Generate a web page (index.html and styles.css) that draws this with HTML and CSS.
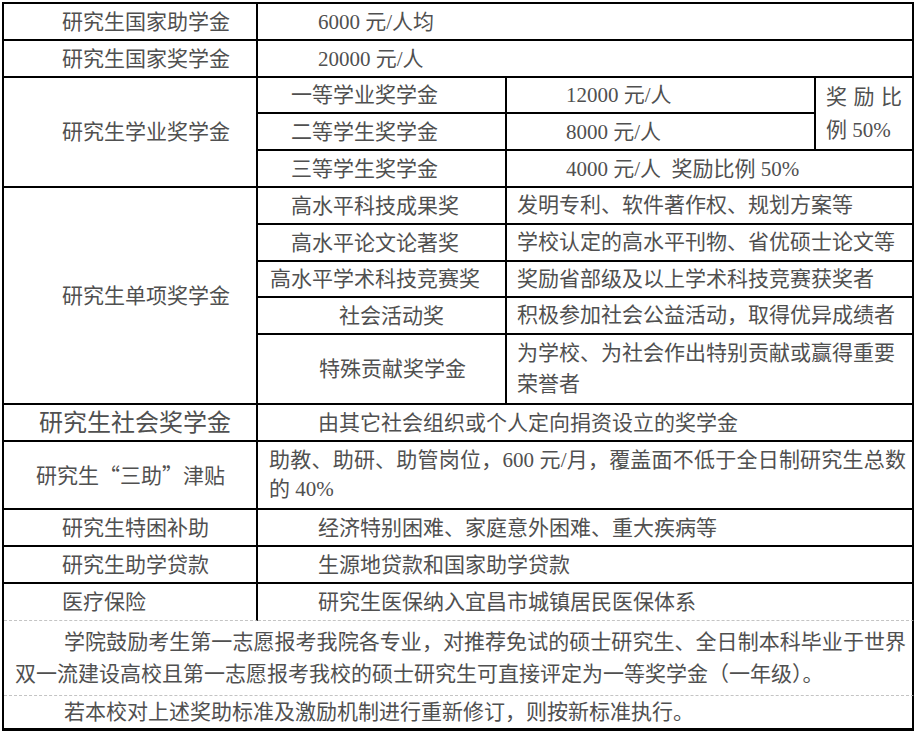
FILE: index.html
```html
<!DOCTYPE html>
<html lang="zh-CN">
<head>
<meta charset="utf-8">
<title>研究生奖助体系</title>
<link rel="stylesheet" href="styles.css">
</head>
<body>
<table class="aid">
  <colgroup>
    <col class="c1"><col class="c2"><col class="c3"><col class="c4">
  </colgroup>
  <tbody>
    <tr class="h37">
      <td class="lbl">研究生国家助学金</td>
      <td class="val" colspan="3">6000 元/人均</td>
    </tr>
    <tr class="h37">
      <td class="lbl">研究生国家奖学金</td>
      <td class="val" colspan="3">20000 元/人</td>
    </tr>
    <tr class="h36">
      <td class="lbl" rowspan="3">研究生学业奖学金</td>
      <td class="sub">一等学业奖学金</td>
      <td class="amt">12000 元/人</td>
      <td class="ratio" rowspan="2">奖 励 比 例 50%</td>
    </tr>
    <tr class="h37">
      <td class="sub">二等学生奖学金</td>
      <td class="amt">8000 元/人</td>
    </tr>
    <tr class="h37">
      <td class="sub">三等学生奖学金</td>
      <td class="amt" colspan="2">4000 元/人&nbsp; 奖励比例 50%</td>
    </tr>
    <tr class="h37">
      <td class="lbl" rowspan="5">研究生单项奖学金</td>
      <td class="sub">高水平科技成果奖</td>
      <td class="desc" colspan="2">发明专利、软件著作权、规划方案等</td>
    </tr>
    <tr class="h37">
      <td class="sub">高水平论文论著奖</td>
      <td class="desc" colspan="2">学校认定的高水平刊物、省优硕士论文等</td>
    </tr>
    <tr class="h36">
      <td class="sub sub-wide">高水平学术科技竞赛奖</td>
      <td class="desc" colspan="2">奖励省部级及以上学术科技竞赛获奖者</td>
    </tr>
    <tr class="h37">
      <td class="sub sub-short">社会活动奖</td>
      <td class="desc" colspan="2">积极参加社会公益活动，取得优异成绩者</td>
    </tr>
    <tr class="h70">
      <td class="sub sub-mid">特殊贡献奖学金</td>
      <td class="desc" colspan="2">为学校、为社会作出特别贡献或赢得重要荣誉者</td>
    </tr>
    <tr class="h37">
      <td class="lbl lbl-big">研究生社会奖学金</td>
      <td class="val" colspan="3">由其它社会组织或个人定向捐资设立的奖学金</td>
    </tr>
    <tr class="h68">
      <td class="lbl lbl-quote">研究生<span class="cjk">“</span>三助<span class="cjk">”</span>津贴</td>
      <td class="val val-wrap" colspan="3">助教、助研、助管岗位，600 元/月，覆盖面不低于全日制研究生总数的 40%</td>
    </tr>
    <tr class="h37">
      <td class="lbl">研究生特困补助</td>
      <td class="val" colspan="3">经济特别困难、家庭意外困难、重大疾病等</td>
    </tr>
    <tr class="h37">
      <td class="lbl">研究生助学贷款</td>
      <td class="val" colspan="3">生源地贷款和国家助学贷款</td>
    </tr>
    <tr class="h37 last">
      <td class="lbl">医疗保险</td>
      <td class="val" colspan="3">研究生医保纳入宜昌市城镇居民医保体系</td>
    </tr>
    <tr class="h75">
      <td class="note note-dash" colspan="4">学院鼓励考生第一志愿报考我院各专业，对推荐免试的硕士研究生、全日制本科毕业于世界双一流建设高校且第一志愿报考我校的硕士研究生可直接评定为一等奖学金（一年级）。</td>
    </tr>
    <tr class="h35">
      <td class="note note-end" colspan="4">若本校对上述奖助标准及激励机制进行重新修订，则按新标准执行。</td>
    </tr>
  </tbody>
</table>
</body>
</html>
```

FILE: styles.css
```css
html, body {
  margin: 0;
  padding: 0;
  background: #ffffff;
}

body {
  font-family: "Liberation Serif", "Noto Sans CJK SC", serif;
  font-size: 21px;
  color: #505050;
}

.cjk {
  font-family: "Noto Sans CJK SC", sans-serif;
}

.aid {
  margin: 2px 0 0 2px;
  width: 912px;
  table-layout: fixed;
  border-collapse: separate;
  border-spacing: 0;
  border-top: 2px solid #000;
  border-left: 2px solid #000;
}

.c1 { width: 254px; }
.c2 { width: 249px; }
.c3 { width: 309px; }
.c4 { width: 98px; }

.aid td {
  box-sizing: border-box;
  border-right: 2px solid #000;
  border-bottom: 2px solid #000;
  padding: 0 6px 0 0;
  vertical-align: middle;
  line-height: 30px;
  white-space: normal;
  text-align: left;
}

.h35 { height: 35px; }
.h36 { height: 36px; }
.h37 { height: 37px; }
.h68 { height: 68px; }
.h70 { height: 70px; }
.h75 { height: 75px; }

.aid td.lbl { padding-left: 58px; }
.aid td.lbl-big { padding-left: 35px; font-size: 24px; }
.aid td.lbl-quote { padding-left: 32px; }

.aid td.val { padding-left: 60px; }
.aid td.val-wrap {
  padding-left: 11px;
  padding-right: 6px;
  text-align: justify;
  line-height: 29px;
}

.aid td.sub { padding-left: 33px; }
.aid td.sub-wide { padding-left: 12px; }
.aid td.sub-short { padding-left: 81px; }
.aid td.sub-mid { padding-left: 61px; }

.aid td.amt { padding-left: 59px; }
.aid td.desc { padding-left: 10px; line-height: 31px; }

.aid td.ratio {
  padding: 0 10px;
  text-align: justify;
  line-height: 33px;
}

.aid tr.last td {
  border-bottom: 1px dashed #c4c4c4;
}

.aid td.note {
  padding: 0 6px 0 11px;
  text-indent: 49px;
  text-align: justify;
  line-height: 32px;
}

.aid td.note-dash {
  border-bottom: 1px dashed #c4c4c4;
}

.aid td.note-end {
  border-bottom: 3px solid #000;
}
```
